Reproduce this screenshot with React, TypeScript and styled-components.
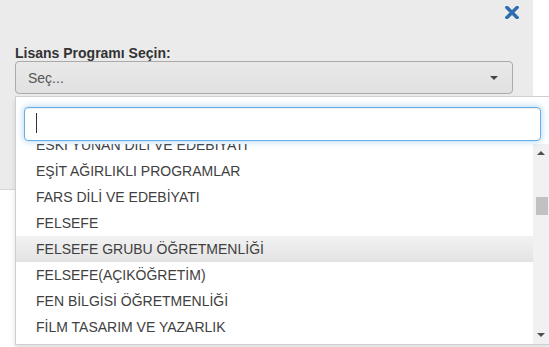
import React, { useLayoutEffect, useRef } from "react";
import styled, { createGlobalStyle } from "styled-components";

const Global = createGlobalStyle`
  html, body { margin: 0; padding: 0; background: #fff; }
  body { font-family: "Liberation Sans", Arial, sans-serif; overflow: hidden; }
  * { box-sizing: border-box; }
`;

const Page = styled.div`
  position: relative;
  width: 549px;
  height: 347px;
  overflow: hidden;
`;

const Panel = styled.div`
  width: 533px;
  height: 190px;
  background: #ebebeb;
  border-bottom: 1px solid #d6d6d6;
  padding: 6px 20px 0 15px;
  display: flex;
  flex-direction: column;
`;

const CloseRow = styled.div`
  display: flex;
  justify-content: flex-end;
  margin-right: -6px;
  height: 14px;
`;

const CloseButton = styled.button`
  border: 0;
  padding: 0;
  background: none;
  width: 14px;
  height: 13px;
  display: flex;
  cursor: pointer;
`;

const Label = styled.label`
  margin-top: 25px;
  font-size: 14px;
  font-weight: bold;
  color: #333;
  line-height: 16px;
`;

const SelectBox = styled.div`
  height: 33px;
  border: 1px solid #aaa;
  border-radius: 4px;
  background: linear-gradient(#e9e9e9, #e1e1e1);
  display: flex;
  align-items: center;
  justify-content: space-between;
  padding: 0 14px 0 12px;
  color: #555;
  font-size: 14px;
`;

const Caret = styled.span`
  width: 0;
  height: 0;
  border-left: 4px solid transparent;
  border-right: 4px solid transparent;
  border-top: 4px solid #444;
`;

const Drop = styled.div`
  position: absolute;
  left: 15px;
  top: 96px;
  width: 535px;
  height: 249px;
  background: #fff;
  border: 1px solid #cfcfcf;
  box-shadow: 0 4px 5px rgba(0, 0, 0, 0.12);
  display: flex;
  flex-direction: column;
`;

const SearchWrap = styled.div`
  position: relative;
  margin: 10px 8px 3px 8px;
  display: flex;
`;

const Search = styled.input`
  flex: 1;
  height: 34px;
  border: 1px solid #66afe9;
  border-radius: 4px;
  box-shadow: inset 0 1px 1px rgba(0, 0, 0, 0.075), 0 0 7px rgba(102, 175, 233, 0.6);
  outline: none;
  padding: 0 11px;
  font-family: "Liberation Sans", Arial, sans-serif;
  font-size: 16px;
  color: #333;
  caret-color: transparent;
`;

const TextCaret = styled.span`
  position: absolute;
  left: 12px;
  top: 6px;
  width: 1px;
  height: 20px;
  background: #333;
  pointer-events: none;
`;

const ResultsWrap = styled.div`
  flex: 1;
  display: flex;
  min-height: 0;
`;

const Results = styled.ul`
  flex: 1;
  list-style: none;
  margin: 0;
  padding: 0;
  overflow: hidden;
`;

const Item = styled.li<{ $active?: boolean }>`
  height: 26px;
  line-height: 27px;
  padding-left: 20px;
  font-size: 14px;
  color: #404040;
  white-space: nowrap;
  background: ${(p) => (p.$active ? "linear-gradient(#f2f2f2, #e3e3e3)" : "transparent")};
`;

const ScrollTrack = styled.div`
  width: 16px;
  background: #f1f1f1;
  display: flex;
  flex-direction: column;
  align-items: center;
  padding-top: 7px;
`;

const ArrowUp = styled.span`
  width: 0;
  height: 0;
  border-left: 4px solid transparent;
  border-right: 4px solid transparent;
  border-bottom: 4px solid #505050;
`;

const ArrowDown = styled.span`
  width: 0;
  height: 0;
  border-left: 4px solid transparent;
  border-right: 4px solid transparent;
  border-top: 4px solid #505050;
  margin-bottom: 7px;
`;

const Thumb = styled.div`
  width: 12px;
  height: 18px;
  background: #c1c1c1;
  margin-top: 42px;
  margin-left: 2px;
`;

const Spacer = styled.div`
  flex: 1;
`;

const items = [
  "ENDÜSTRİ MÜHENDİSLİĞİ",
  "ENDÜSTRİ ÜRÜNLERİ TASARIMI",
  "ESKİ YUNAN DİLİ VE EDEBİYATI",
  "EŞİT AĞIRLIKLI PROGRAMLAR",
  "FARS DİLİ VE EDEBİYATI",
  "FELSEFE",
  "FELSEFE GRUBU ÖĞRETMENLİĞİ",
  "FELSEFE(AÇIKÖĞRETİM)",
  "FEN BİLGİSİ ÖĞRETMENLİĞİ",
  "FİLM TASARIM VE YAZARLIK",
  "FİZİK",
  "FİZİK MÜHENDİSLİĞİ",
];

export default function App() {
  const listRef = useRef<HTMLUListElement>(null);
  useLayoutEffect(() => {
    if (listRef.current) listRef.current.scrollTop = 64;
  }, []);
  return (
    <Page>
      <Global />
      <Panel>
        <CloseRow>
          <CloseButton aria-label="Kapat">
            <svg width="14" height="13" viewBox="0 0 14 13">
              <path d="M2 1.5 L12 11.5 M12 1.5 L2 11.5" stroke="#2f6ead" strokeWidth="3.4" strokeLinecap="square" />
            </svg>
          </CloseButton>
        </CloseRow>
        <Label>Lisans Programı Seçin:</Label>
        <SelectBox>
          <span>Seç...</span>
          <Caret />
        </SelectBox>
      </Panel>
      <Drop>
        <SearchWrap>
          <Search defaultValue="" />
          <TextCaret />
        </SearchWrap>
        <ResultsWrap>
          <Results ref={listRef}>
            {items.map((t) => (
              <Item key={t} $active={t === "FELSEFE GRUBU ÖĞRETMENLİĞİ"}>
                {t}
              </Item>
            ))}
          </Results>
          <ScrollTrack>
            <ArrowUp />
            <Thumb />
            <Spacer />
            <ArrowDown />
          </ScrollTrack>
        </ResultsWrap>
      </Drop>
    </Page>
  );
}
